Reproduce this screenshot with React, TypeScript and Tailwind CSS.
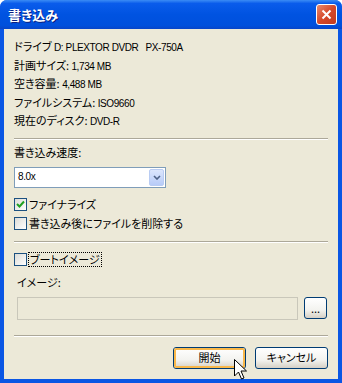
import React from 'react';

const font = {
  fontFamily: '"Noto Sans CJK JP", sans-serif',
  fontFeatureSettings: '"palt"',
};

// 英数字部分は幅の狭いフォントで
function L({ children }: { children: React.ReactNode }) {
  return (
    <span
      className="text-[10px] tracking-[-0.4px] leading-none"
      style={{ fontFamily: '"Liberation Sans", sans-serif' }}
    >
      {children}
    </span>
  );
}

function Checkbox({ checked }: { checked?: boolean }) {
  return (
    <span className="w-[13px] h-[13px] border border-[#1C5180] bg-[linear-gradient(135deg,#DCDCD7_0%,#FFFFFF_100%)] flex items-center justify-center shrink-0">
      {checked && (
        <svg width="9" height="9" viewBox="0 0 9 9">
          <path d="M1 4 L3.5 6.5 L8 1.5" stroke="#21A121" strokeWidth="2" fill="none" />
        </svg>
      )}
    </span>
  );
}

function XpButton({ label, hot }: { label: string; hot?: boolean }) {
  return (
    <div className="w-[73px] h-[22px] rounded-[3px] border border-[#003C74] bg-[linear-gradient(180deg,#FFFFFF_0%,#F3F3EF_60%,#D6D0C5_100%)] flex items-center justify-center text-[11px] text-black">
      <div
        className={
          hot
            ? 'w-full h-full rounded-[2px] shadow-[inset_0_0_0_2px_#F9B84A] flex items-center justify-center'
            : 'w-full h-full flex items-center justify-center'
        }
      >
        {label}
      </div>
    </div>
  );
}

export default function App() {
  return (
    <div
      className="w-[342px] h-[383px] flex flex-col rounded-t-[7px] overflow-hidden bg-[#0A56E4] relative"
      style={font}
    >
      {/* タイトルバー */}
      <div className="h-[29px] shrink-0 flex items-center justify-between pl-[8px] pr-[5px] bg-[linear-gradient(180deg,#3B8CF5_0%,#0A5CEB_12%,#0053E1_50%,#0050DC_88%,#0845C8_100%)]">
        <span className="text-white font-bold text-[13px] [text-shadow:1px_1px_#0A1E80]">書き込み</span>
        <div className="w-[21px] h-[21px] rounded-[3px] border border-white bg-[linear-gradient(135deg,#E88B6E_0%,#D6492A_50%,#C23A1E_100%)] flex items-center justify-center">
          <svg width="11" height="11" viewBox="0 0 11 11">
            <path d="M1.5 1.5 L9.5 9.5 M9.5 1.5 L1.5 9.5" stroke="white" strokeWidth="2" />
          </svg>
        </div>
      </div>

      {/* 本体 */}
      <div className="flex-1 mx-[4px] mb-[4px] bg-[#ECE9D8] px-[10px] pt-[8px] text-[11px] text-black flex flex-col">
        <div className="flex flex-col">
          <span className="h-[18.5px] leading-[18.5px]">ドライブ <L>D: PLEXTOR DVDR&nbsp;&nbsp; PX-750A</L></span>
          <span className="h-[18.5px] leading-[18.5px]">計画サイズ: <L>1,734 MB</L></span>
          <span className="h-[18.5px] leading-[18.5px]">空き容量: <L>4,488 MB</L></span>
          <span className="h-[18.5px] leading-[18.5px]">ファイルシステム: <L>ISO9660</L></span>
          <span className="h-[18.5px] leading-[18.5px]">現在のディスク: <L>DVD-R</L></span>
        </div>

        <div className="mt-[8px] h-[2px] border-t border-[#ACA899] border-b border-b-white" />

        <span className="mt-[4px] h-[16px] leading-[16px]">書き込み速度:</span>

        <div className="mt-[7px] w-[152px] h-[21px] border border-[#7F9DB9] bg-white flex items-center justify-between pl-[3px] pr-[1px]">
          <L>8.0x</L>
          <div className="w-[15px] h-[17px] rounded-[2px] border border-[#B9CCF3] bg-[linear-gradient(180deg,#DCE6FC_0%,#B7CBF8_100%)] flex items-center justify-center">
            <svg width="8" height="5" viewBox="0 0 8 5">
              <path d="M1 1 L4 4 L7 1" stroke="#4D6185" strokeWidth="1.6" fill="none" />
            </svg>
          </div>
        </div>

        <div className="mt-[10px] flex items-center gap-[2px] h-[14px]">
          <Checkbox checked />
          <span>ファイナライズ</span>
        </div>
        <div className="mt-[5px] flex items-center gap-[2px] h-[14px]">
          <Checkbox />
          <span>書き込み後にファイルを削除する</span>
        </div>

        <div className="mt-[10px] h-[2px] border-t border-[#ACA899] border-b border-b-white" />

        <div className="mt-[10px] flex items-center gap-[1px] h-[14px]">
          <Checkbox />
          <span className="border border-dotted border-black leading-[13px] px-[1px]">ブートイメージ</span>
        </div>

        <span className="mt-[7px] ml-[3px] h-[16px] leading-[16px]">イメージ:</span>

        <div className="mt-[7px] ml-[3px] flex items-center gap-[6px]">
          <div className="w-[281px] h-[23px] border border-[#C9C7BA] bg-[#ECE9D8]" />
          <div className="w-[23px] h-[22px] rounded-[3px] border border-[#003C74] bg-[linear-gradient(180deg,#FFFFFF_0%,#F3F3EF_60%,#D6D0C5_100%)] flex items-end justify-center pb-[4px] text-[11px] leading-none">
            ...
          </div>
        </div>

        <div className="mt-[15px] h-[2px] border-t border-[#ACA899] border-b border-b-white" />

        <div className="mt-[10px] flex justify-end gap-[9px]">
          <XpButton label="開始" hot />
          <XpButton label="キャンセル" />
        </div>
      </div>

      {/* マウスカーソル */}
      <svg className="absolute left-[234px] top-[359px]" width="14" height="24" viewBox="0 0 14 24">
        <path d="M0.5 0.5 L0.5 17 L4.5 13 L7.5 20 L10 19 L7 12 L12.5 12 Z" fill="white" stroke="black" strokeWidth="1" />
      </svg>
    </div>
  );
}
